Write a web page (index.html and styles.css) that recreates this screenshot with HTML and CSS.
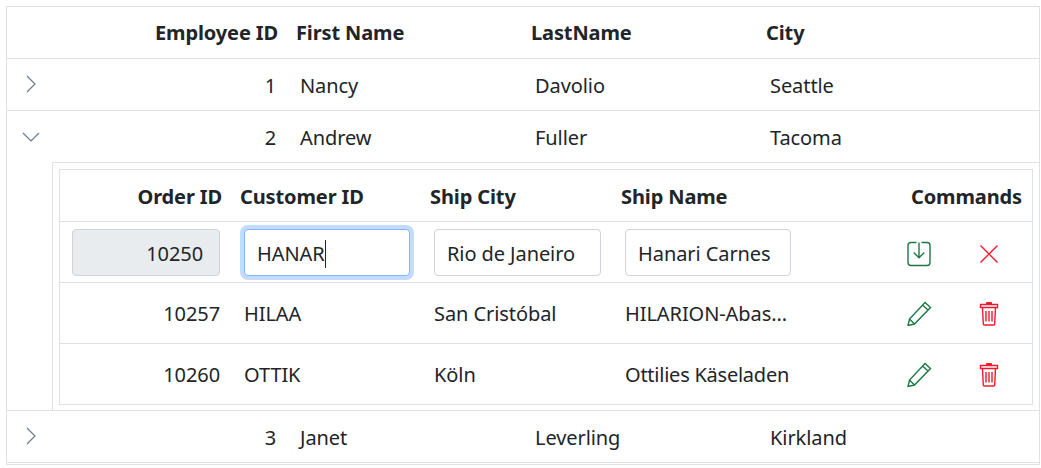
FILE: index.html
```html
<!DOCTYPE html>
<html lang="en">
<head>
<meta charset="utf-8">
<title>Employees</title>
<link rel="stylesheet" href="styles.css">
</head>
<body>
<div class="grid">
<table class="outer">
<colgroup><col class="c-exp"><col class="c-id"><col class="c-name"><col class="c-name"><col></colgroup>
<thead>
<tr><th></th><th class="num">Employee ID</th><th>First Name</th><th>LastName</th><th>City</th></tr>
</thead>
<tbody>
<tr>
<td class="exp"><svg class="chev-r" viewBox="0 0 10 18"><path d="M1 1l8 8-8 8"/></svg></td>
<td class="num">1</td><td>Nancy</td><td>Davolio</td><td>Seattle</td>
</tr>
<tr class="open">
<td class="exp"><svg class="chev-d" viewBox="0 0 18 10"><path d="M1 1l8 8 8-8"/></svg></td>
<td class="num">2</td><td>Andrew</td><td>Fuller</td><td>Tacoma</td>
</tr>
<tr>
<td class="spacer"></td>
<td colspan="4" class="detail">
<table class="inner">
<colgroup><col class="i-order"><col class="i-cust"><col class="i-city"><col class="i-name"><col class="i-act"><col></colgroup>
<thead>
<tr><th class="num">Order ID</th><th>Customer ID</th><th>Ship City</th><th>Ship Name</th><th colspan="2" class="num">Commands</th></tr>
</thead>
<tbody>
<tr class="edit">
<td><div class="field disabled">10250</div></td>
<td><div class="field focus"><span class="caret">HANAR</span></div></td>
<td><div class="field">Rio de Janeiro</div></td>
<td><div class="field">Hanari Carnes</div></td>
<td class="act first"><svg class="ico green" viewBox="0 0 26 26"><path d="M10.500 1.500H5a3 3 0 0 0-3 3v17a3 3 0 0 0 3 3h16a3 3 0 0 0 3-3v-17a3 3 0 0 0-3-3h-5.500M13 1.500V16.500M7.700 11.500l5.300 5.300 5.300-5.300"/></svg></td>
<td class="act last"><svg class="ico red" viewBox="0 0 26 26"><path d="M4.500 4.500l17 17M21.500 4.500l-17 17"/></svg></td>
</tr>
<tr>
<td class="num">10257</td><td>HILAA</td><td>San Cristóbal</td><td class="clip"><div>HILARION-Abastos</div></td>
<td class="act first"><svg class="ico green pencil" viewBox="0 0 26 26"><path d="M2 25.500l1.500-6.500L19 2.500l5.500 5L8.500 24zM3.500 19l5 5M16.500 5l5.500 5"/></svg></td>
<td class="act last"><svg class="ico red" viewBox="0 0 26 26"><path d="M4.500 4.500h17v3h-17zM6.500 7.500l.8 16.500a1 1 0 0 0 1 1h9.400a1 1 0 0 0 1-1l.8-16.500M10 11v10.500M13 11v10.500M16 11v10.500"/><path class="handle" d="M10 4V3a1 1 0 0 1 1-1h4a1 1 0 0 1 1 1v1z"/></svg></td>
</tr>
<tr>
<td class="num">10260</td><td>OTTIK</td><td>Köln</td><td class="tight">Ottilies Käseladen</td>
<td class="act first"><svg class="ico green pencil" viewBox="0 0 26 26"><path d="M2 25.500l1.500-6.500L19 2.500l5.500 5L8.500 24zM3.500 19l5 5M16.500 5l5.500 5"/></svg></td>
<td class="act last"><svg class="ico red" viewBox="0 0 26 26"><path d="M4.500 4.500h17v3h-17zM6.500 7.500l.8 16.500a1 1 0 0 0 1 1h9.400a1 1 0 0 0 1-1l.8-16.500M10 11v10.500M13 11v10.500M16 11v10.500"/><path class="handle" d="M10 4V3a1 1 0 0 1 1-1h4a1 1 0 0 1 1 1v1z"/></svg></td>
</tr>
</tbody>
</table>
</td>
</tr>
<tr>
<td class="exp"><svg class="chev-r" viewBox="0 0 10 18"><path d="M1 1l8 8-8 8"/></svg></td>
<td class="num">3</td><td>Janet</td><td>Leverling</td><td>Kirkland</td>
</tr>
</tbody>
</table>
</div>
</body>
</html>
```
FILE: styles.css
```css
html, body { margin: 0; background: #fff; }
body { padding: 6px 1px 0 6px; font: 20px/30px "Noto Sans", "Open Sans", sans-serif; color: #212529; letter-spacing: -0.004em; }
.grid { border: 1px solid #dee2e6; padding-bottom: 1px; }
table { border-collapse: separate; border-spacing: 0; table-layout: fixed; width: 100%; }
.c-exp { width: 45px; }
.c-id { width: 236px; }
.c-name { width: 235px; }
.outer > thead > tr > th { box-sizing: border-box; height: 52px; padding: 1px 8px 0; border-bottom: 1px solid #dee2e6; }
.outer > thead > tr > th.num { padding-right: 10px; }
.outer > tbody > tr > td { box-sizing: border-box; height: 52px; padding: 2px 12px 0; border-bottom: 1px solid #dee2e6; }
th { font-weight: 700; text-align: left; letter-spacing: -0.006em; }
.num { text-align: right; }
.outer > tbody > tr > td.exp { padding: 0; vertical-align: middle; }
.exp svg { display: block; fill: none; stroke: #6c7a8d; stroke-width: 1.2; }
.chev-r { width: 10px; height: 18px; margin: -2px 0 0 19px; }
.chev-d { width: 18px; height: 10px; margin: 0 0 0 15px; }
.outer > tbody > tr.open > td { height: 51px; border-bottom: 0; }
.outer > tbody > tr > td.spacer { padding: 0; }
.outer > tbody > tr > td.detail { padding: 6px 6px 5px; border-left: 1px solid #dee2e6; border-top: 1px solid #dee2e6; height: auto; }
.inner { border: 1px solid #dee2e6; border-bottom: 0; }
.i-order { width: 172px; }
.i-cust { width: 190px; }
.i-city { width: 191px; }
.i-name { width: 190px; }
.i-act { width: 151px; }
.inner th, .inner td { box-sizing: border-box; padding: 1px 12px 0; border-bottom: 1px solid #dee2e6; height: 61px; }
.inner th { height: 52px; padding: 3px 8px 0; }
.inner th.num { padding-right: 10px; }
.inner .edit td { padding-top: 0; }
.field { box-sizing: border-box; height: 47px; padding: 9px 12px 0; border: 1px solid #ced4da; border-radius: 4px; background: #fff; white-space: nowrap; }
.field.disabled { background: #e9ecef; text-align: right; padding-right: 16px; }
.field.focus { border-color: #86b7fe; box-shadow: 0 0 0 4px #c2dbfe; }
.caret { border-right: 1px solid #212529; display: inline-block; height: 28px; line-height: 28px; }
.clip div { overflow: hidden; text-overflow: ellipsis; white-space: nowrap; }
.inner td.tight { white-space: nowrap; letter-spacing: -0.012em; padding-right: 0; }
.inner td.first { padding: 0 0 0 80px; }
.inner td.last { padding: 0 8px 0 0; }
.inner .edit td.act { padding-top: 4px; }
.ico { display: block; width: 26px; height: 26px; margin: 0 auto; fill: none; stroke-width: 1.4; }
.green { stroke: #1a7a42; }
.red { stroke: #f5182a; }
.handle { fill: #f5182a; stroke: none; }
```
